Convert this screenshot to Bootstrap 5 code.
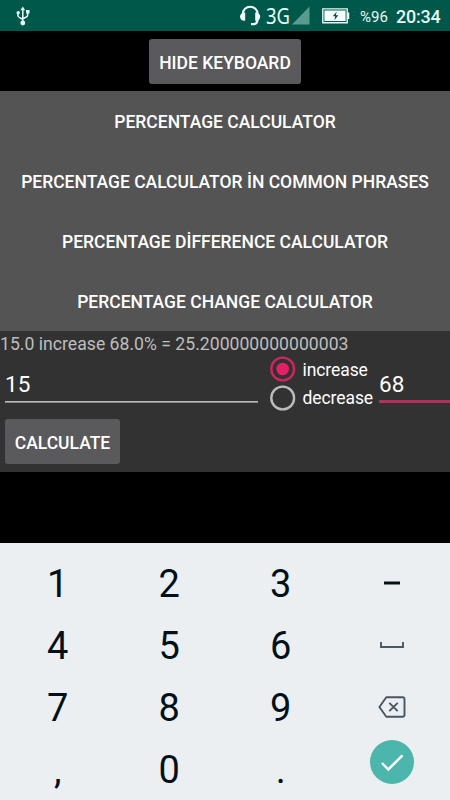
<!DOCTYPE html>
<html lang="en">
<head>
<meta charset="utf-8">
<meta name="viewport" content="width=device-width, initial-scale=1">
<title>Percentage Calculator</title>
<link href="https://cdn.jsdelivr.net/npm/bootstrap@5.3.0/dist/css/bootstrap.min.css" rel="stylesheet">
<style>
  body { font-family: Roboto, "Liberation Sans", sans-serif; font-size: 17.5px; line-height: 20px; }
  .screen { width: 450px; height: 800px; background: #000; }
  .status { height: 31px; background: #00584b; color: #e8f8f4; padding-left: 16px; padding-right: 10px; }
  .net { font: 400 22.5px/31px "Noto Sans", sans-serif; margin: 0 3px 0 5px; width: 23px; color: #e4fbf6; transform: scaleX(.82); transform-origin: left; }
  .battery { margin-left: 12px; }
  .pct { font-size: 15px; margin: 2px 9px 0 10px; width: 27px; }
  .clock { font-size: 17.9px; letter-spacing: -.2px; font-weight: 500; margin-top: 2px; width: 44px; }
  .top-area { height: 60px; padding-top: 8px; }
  .btn-droid { --bs-btn-color: #fff; --bs-btn-bg: #5a595b; --bs-btn-hover-bg: #666; --bs-btn-hover-color: #fff; --bs-btn-border-width: 0; --bs-btn-border-radius: 3px; --bs-btn-font-weight: 500; --bs-btn-font-size: 17.5px; --bs-btn-line-height: 20px; --bs-btn-padding-x: 0; height: 45px; padding-top: 2px; padding-bottom: 0; white-space: nowrap; }
  .w-hide { width: 152px; }
  .w-calc { width: 115px; margin: 7px 0 0 5px; }
  .menu { background: #545454; }
  .menu .list-group-item { height: 60px; padding: 2px 0 0; color: #fff; font-weight: 500; background: transparent; }
  .panel { height: 141px; background: #323232; color: #fff; }
  .result { height: 24px; padding-top: 3px; color: #bebebe; font-size: 17.6px; letter-spacing: .02px; white-space: nowrap; }
  .entry { height: 47px; font-size: 22.5px; line-height: 26px; padding-top: 16px; }
  .entry-a { width: 253px; margin-left: 5px; }
  .entry-b { width: 71px; }
  .rule { height: 2px; margin-top: 4px; background: linear-gradient(#b9b9b9 50%, #8a8a8a 50%); }
  .rule-active { height: 3px; margin-top: 3px; background: #b62d5e; }
  .options { width: 109px; margin-left: 12px; letter-spacing: -.08px; }
  .options label { height: 28.5px; gap: 6.5px; }
  .options label:first-child span { padding-top: 2px; }
  .keyboard { height: 257px; background: #ebeff2; color: #031018; padding: 9px 0 0 2px; font-size: 38px; line-height: 64px; }
  .keyboard .key { width: 111.5px; height: 62px; }
  .keyboard .key-enter { padding-top: 2px; }
</style>
<script src="https://cdn.jsdelivr.net/npm/bootstrap@5.3.0/dist/js/bootstrap.bundle.min.js"></script>
</head>
<body class="m-0">
<div class="screen d-flex flex-column overflow-hidden">

  <header class="status d-flex align-items-center flex-shrink-0">
    <svg width="14" height="20" viewBox="0 0 14 20" fill="none" stroke="#e6faf6" stroke-width="1.5">
      <path d="M6.800 3v13M1.900 7v2.300q0 2 2 2.500l2.900 1.600M11.700 6v2.800q0 1.800-1.800 2.500L6.800 12.700"/>
      <path d="M6.800.5 9.200 4.300H4.400z" fill="#e6faf6" stroke="none"/>
      <circle cx="2.200" cy="6.700" r="1.700" fill="#e6faf6" stroke="none"/>
      <path d="M10 4h3.500v3.500H10z" fill="#e6faf6" stroke="none"/>
      <circle cx="6.800" cy="17" r="2.400" fill="#e6faf6" stroke="none"/>
    </svg>
    <svg class="ms-auto" width="22" height="21" viewBox="0 0 22 21" fill="none" stroke="#eefcfa">
      <path d="M3.900 10V8.500a7.300 6.800 0 0 1 14.600 0V10" stroke-width="2.100"/>
      <path d="M6.200 7.600v8.200C2.900 16 1 14 1 11.700S2.900 7.700 6.200 7.600zM16.200 7.600v8.200c3.300.2 5-1.800 5-4.100s-1.700-4-5-4.100z" fill="#eefcfa" stroke="none"/>
      <path d="M18.500 14.500c0 3-1.700 4.600-4.200 4.700H12" stroke-width="2.300"/>
    </svg>
    <span class="net">3G</span>
    <svg width="18" height="19" viewBox="0 0 18 19"><path d="M17.500.5V18.500H0z" fill="#5a9b8f"/></svg>
    <svg class="battery" width="28" height="16" viewBox="0 0 28 16">
      <path d="M.8.900h24.400v13.800H.8z" fill="none" stroke="#e4f7f3" stroke-width="1.400"/>
      <path d="M2.400 2.500h21.200v10.600H2.400zM25.500 4.500h1.700v6.500h-1.700z" fill="#f4fffd"/>
      <path d="M14.800 3.500 10.800 8.300h2.500l-1 4 4-5h-2.600z" fill="#00483e"/>
    </svg>
    <span class="pct">%96</span>
    <span class="clock">20:34</span>
  </header>

  <div class="top-area d-flex justify-content-center align-items-start flex-shrink-0">
    <button type="button" class="btn btn-droid w-hide">HIDE KEYBOARD</button>
  </div>

  <nav class="menu list-group list-group-flush rounded-0 flex-shrink-0">
    <a href="#" class="list-group-item border-0 d-flex align-items-center justify-content-center text-nowrap">PERCENTAGE CALCULATOR</a>
    <a href="#" class="list-group-item border-0 d-flex align-items-center justify-content-center text-nowrap">PERCENTAGE CALCULATOR İN COMMON PHRASES</a>
    <a href="#" class="list-group-item border-0 d-flex align-items-center justify-content-center text-nowrap">PERCENTAGE DİFFERENCE CALCULATOR</a>
    <a href="#" class="list-group-item border-0 d-flex align-items-center justify-content-center text-nowrap">PERCENTAGE CHANGE CALCULATOR</a>
  </nav>

  <main class="panel flex-shrink-0">
    <div class="result">15.0 increase 68.0% = 25.200000000000003</div>
    <div class="d-flex">
      <div class="entry entry-a"><div>15</div><div class="rule"></div></div>
      <div class="options">
        <label class="d-flex align-items-center">
          <svg width="26" height="26" viewBox="0 0 26 26"><circle cx="12.700" cy="13" r="11.400" fill="none" stroke="#c9285f" stroke-width="2.400"/><circle cx="12.700" cy="13" r="6.300" fill="#e31f66"/></svg>
          <span>increase</span>
        </label>
        <label class="d-flex align-items-center">
          <svg width="26" height="26" viewBox="0 0 26 26"><circle cx="12.700" cy="13" r="11.400" fill="none" stroke="#bcbcbc" stroke-width="2.400"/></svg>
          <span>decrease</span>
        </label>
      </div>
      <div class="entry entry-b"><div>68</div><div class="rule rule-active"></div></div>
    </div>
    <button type="button" class="btn btn-droid d-block w-calc">CALCULATE</button>
  </main>

  <section class="keyboard mt-auto flex-shrink-0">
    <div class="d-flex text-center">
      <div class="key">1</div><div class="key">2</div><div class="key">3</div>
      <div class="key d-flex align-items-center justify-content-center"><svg width="16" height="4" viewBox="0 0 16 4"><path d="M0 .5h16v3H0z" fill="#031018"/></svg></div>
    </div>
    <div class="d-flex text-center">
      <div class="key">4</div><div class="key">5</div><div class="key">6</div>
      <div class="key d-flex align-items-center justify-content-center"><svg width="24" height="8" viewBox="0 0 24 8"><path d="M1 1v5h22V1" fill="none" stroke="#4b5964" stroke-width="1.900"/></svg></div>
    </div>
    <div class="d-flex text-center">
      <div class="key">7</div><div class="key">8</div><div class="key">9</div>
      <div class="key d-flex align-items-center justify-content-center"><svg width="28" height="22" viewBox="0 0 28 22" fill="none" stroke="#485661" stroke-width="1.900"><path d="M8.300 1.300h16.200q2 0 2 2v15.400q0 2-2 2H8.300L1.400 11z" stroke-linejoin="round"/><path d="m11.300 6.800 8.400 8.400m0-8.400-8.400 8.400"/></svg></div>
    </div>
    <div class="d-flex text-center">
      <div class="key">,</div><div class="key">0</div><div class="key">.</div>
      <div class="key key-enter d-flex justify-content-center"><svg width="44" height="44" viewBox="0 0 44 44"><circle cx="22" cy="22" r="22" fill="#4db6ac"/><path d="m12 23 6.300 6.500L32.500 15.300" fill="none" stroke="#fff" stroke-width="2.500"/></svg></div>
    </div>
  </section>
</div>
</body>
</html>
